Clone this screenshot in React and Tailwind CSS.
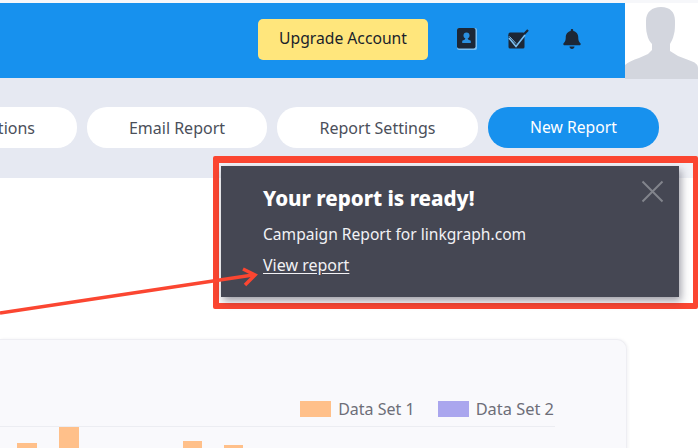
import { FaBell } from "react-icons/fa";

const bars = [
  { left: 17, width: 20, height: 30 },
  { left: 22, width: 20, height: 46 },
  { left: 104, width: 19, height: 32 },
  { left: 22, width: 19, height: 28 },
];

const ContactIcon = () => (
  <svg width="20" height="22" viewBox="0 0 20 22">
    <rect x="0" y="0" width="20" height="22" rx="2" fill="#7cc0f2" />
    <rect x="0" y="0" width="18.5" height="20.500" rx="2" fill="#1c2736" />
    <circle cx="9.500" cy="7.600" r="3" fill="#2a90e0" />
    <path d="M8.400 10h2.200l.5 1.600 2.700 1.200V15H5.200v-2.200l2.700-1.200z" fill="#2a90e0" />
  </svg>
);

const CheckIcon = () => (
  <svg width="21" height="20" viewBox="0 0 21 20">
    <rect x="0.500" y="3.500" width="16" height="16" rx="1.500" fill="#1c2736" />
    <path d="M1 5.500l7 8L20 1" fill="none" stroke="#1c2736" strokeWidth="2.200" />
    <path d="M1 9l7 8.500L17 6" fill="none" stroke="#7cc0f2" strokeWidth="1.600" />
    <path d="M1.500 7.500l6.500 7" fill="none" stroke="#7cc0f2" strokeWidth="1" />
  </svg>
);

const Avatar = () => (
  <svg width="73" height="76" viewBox="0 0 73 76">
    <path
      d="M36 4c9 0 14 5 14 14 0 5 0 10-1 13-1 5-3 8-4 10v7l8 5 13 5c3 1 7 3 7 7v11H0V62c3-3 8-5 14-7l9-4 4-4v-6c-2-2-4-5-5-10-1-3-1-8-1-13 0-9 6-14 15-14z"
      fill="#d3d6de"
    />
  </svg>
);

export default function App() {
  return (
    <div className="relative h-[448px] w-[698px] overflow-hidden bg-white font-['Noto_Sans',sans-serif]">
      <div className="h-[3px] bg-[#f6f7fa]" />

      <header className="flex h-[75px]">
        <div className="flex flex-1 items-center justify-end bg-[#1791ee] pb-[3px] pr-[43px]">
          <button className="h-[41px] w-[170px] rounded-[5px] bg-[#ffe67c] text-[15.7px] text-[#1a1f2b]">
            Upgrade Account
          </button>
          <div className="ml-[29px] flex items-center">
            <ContactIcon />
            <div className="ml-[31px]">
              <CheckIcon />
            </div>
            <FaBell className="ml-[33px] text-[20px] text-[#1c2736]" />
          </div>
        </div>
        <div className="w-[73px] bg-white">
          <Avatar />
        </div>
      </header>

      <div className="flex h-[100px] justify-end gap-[10px] bg-[#e6e9f2] pr-[39px] pt-[29px]">
        <button className="h-[41px] w-[170px] shrink-0 rounded-[20px] bg-white pr-[42px] text-right text-[16px] text-[#4b4f5a]">
          Options
        </button>
        <button className="h-[41px] w-[180px] shrink-0 rounded-[20px] bg-white text-[16px] text-[#4b4f5a]">
          Email Report
        </button>
        <button className="h-[41px] w-[201px] shrink-0 rounded-[20px] bg-white text-[16px] text-[#4b4f5a]">
          Report Settings
        </button>
        <button className="h-[41px] w-[171px] shrink-0 rounded-[20px] bg-[#1791ee] text-[15.7px] text-white">
          New Report
        </button>
      </div>

      <div className="pt-[161px] pr-[71px]">
        <section className="h-[120px] rounded-tr-[10px] border-t border-r border-[#eeeef3] bg-[#f9f9fc] shadow-[1px_0_3px_rgba(40,40,70,0.06)]">
          <div className="flex justify-end gap-[7px] pr-[72px] pt-[61px] text-[16px] leading-[16px] text-[#6d6e78]">
            <span className="h-[16px] w-[31px] bg-[#ffc08a]" />
            <span>Data Set 1</span>
            <span className="ml-[16px] h-[16px] w-[31px] bg-[#aaa6ee]" />
            <span className="text-[16.4px]">Data Set 2</span>
          </div>
          <div className="mr-[71px] mt-[9px] flex h-[22px] items-start border-t border-[#ecedf2]">
            {bars.map((bar, i) => (
              <div
                key={i}
                className="bg-[#ffc08a]"
                style={{ marginLeft: bar.left, width: bar.width, height: bar.height, marginTop: 46 - bar.height }}
              />
            ))}
          </div>
        </section>
      </div>

      {/* callout frame from the annotated screenshot */}
      <div className="absolute left-[213px] top-[156px] h-[153px] w-[485px] rounded-[2px] border-[6px] border-r-[5px] border-t-[7px] border-[#fb4631] bg-white/40 pl-[2px] pt-[3px]">
        <div className="relative h-[131px] w-[458px] bg-[#454753] pl-[42px] pt-[19px] text-white shadow-[2px_4px_8px_rgba(40,40,60,0.45)]">
          <h3 className="text-[20.5px] font-extrabold leading-[27px]">Your report is ready!</h3>
          <p className="mt-[12px] text-[15.6px] leading-[20px] text-[#f2f2f5]">Campaign Report for linkgraph.com</p>
          <a className="mt-[11px] block w-fit text-[16px] leading-[20px] text-[#f2f2f5] underline underline-offset-2">
            View report
          </a>
          <svg className="absolute right-[15px] top-[14px]" width="23" height="23" viewBox="0 0 23 23">
            <path d="M1.500 1.500l20 20M21.500 1.500l-20 20" stroke="#82848c" strokeWidth="2" fill="none" />
          </svg>
        </div>
      </div>

      <svg className="absolute left-0 top-[260px]" width="260" height="60" viewBox="0 0 260 60">
        <path d="M0 53L253 15" stroke="#fb4631" strokeWidth="3.500" fill="none" />
        <path d="M243 9l12 6-10 10" stroke="#fb4631" strokeWidth="3.500" fill="none" />
      </svg>
    </div>
  );
}
